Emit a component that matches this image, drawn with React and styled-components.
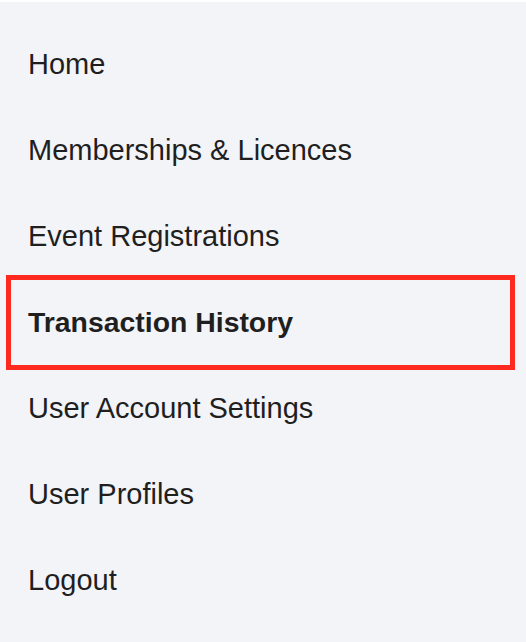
import React from "react";
import styled, { createGlobalStyle } from "styled-components";

const Global = createGlobalStyle`
  html, body { margin: 0; padding: 0; background: #ffffff; }
  body { font-family: "Liberation Sans", Arial, Helvetica, sans-serif; }
`;

const Sidebar = styled.nav`
  margin-top: 2px;
  background: #f3f4f8;
  width: 526px;
  min-height: 640px;
  box-sizing: border-box;
  padding: 19px 0 20px 0;
  display: flex;
  flex-direction: column;
`;

const Item = styled.a`
  position: relative;
  display: flex;
  align-items: center;
  height: 86px;
  padding-left: 28px;
  font-size: ${(p) => (p.$active ? "28.4px" : "29px")};
  color: #1f1f1f;
  text-decoration: none;
  font-weight: ${(p) => (p.$active ? 700 : 400)};

  ${(p) =>
    p.$active &&
    `
    &::after {
      content: "";
      position: absolute;
      left: 6px;
      right: 11px;
      top: -4px;
      bottom: -5px;
      border: 5px solid #ff2a1f;
      pointer-events: none;
    }
  `}
`;

const items = [
  "Home",
  "Memberships & Licences",
  "Event Registrations",
  "Transaction History",
  "User Account Settings",
  "User Profiles",
  "Logout",
];

export default function App() {
  return (
    <>
      <Global />
      <Sidebar>
        {items.map((t) => (
          <Item key={t} href="#" $active={t === "Transaction History"}>
            {t}
          </Item>
        ))}
      </Sidebar>
    </>
  );
}
